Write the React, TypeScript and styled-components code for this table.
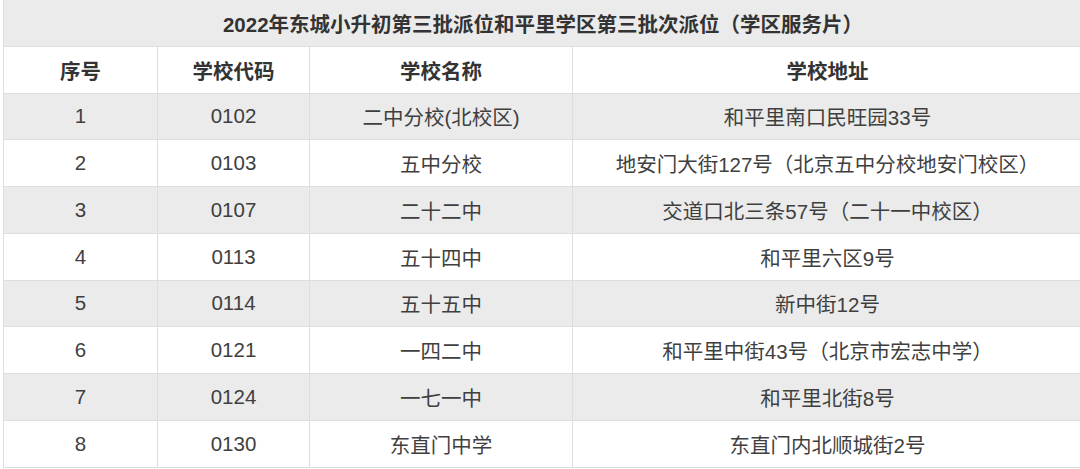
import React from "react";
import styled, { createGlobalStyle } from "styled-components";

const GlobalStyle = createGlobalStyle`
  html, body {
    margin: 0;
    padding: 0;
    background: #ffffff;
  }
  body {
    font-family: "Liberation Sans", "Noto Sans CJK SC", sans-serif;
    overflow: hidden;
  }
`;

const Page = styled.div`
  width: 1080px;
  height: 469px;
  overflow: hidden;
  padding-left: 3px;
  box-sizing: border-box;
`;

const Table = styled.table`
  width: 1080px;
  margin-top: -1px;
  border-collapse: collapse;
  table-layout: fixed;
  color: #3f3f3f;
  font-size: 20.5px;
`;

const Row = styled.tr<{ $shaded: boolean }>`
  height: 46.75px;
  background: ${(p) => (p.$shaded ? "#ebebeb" : "#ffffff")};
`;

const TitleCell = styled.th`
  border: 1.5px solid #dedede;
  font-weight: 700;
  color: #333333;
  text-align: center;
  padding: 0;
`;

const HeadCell = styled.th`
  border: 1.5px solid #dedede;
  font-weight: 700;
  color: #333333;
  text-align: center;
  padding: 0;
`;

const Cell = styled.td`
  border: 1.5px solid #dedede;
  text-align: center;
  padding: 0;
  white-space: nowrap;
`;

const rows: [string, string, string, string][] = [
  ["1", "0102", "二中分校(北校区)", "和平里南口民旺园33号"],
  ["2", "0103", "五中分校", "地安门大街127号（北京五中分校地安门校区）"],
  ["3", "0107", "二十二中", "交道口北三条57号（二十一中校区）"],
  ["4", "0113", "五十四中", "和平里六区9号"],
  ["5", "0114", "五十五中", "新中街12号"],
  ["6", "0121", "一四二中", "和平里中街43号（北京市宏志中学）"],
  ["7", "0124", "一七一中", "和平里北街8号"],
  ["8", "0130", "东直门中学", "东直门内北顺城街2号"],
];

export default function App() {
  return (
    <Page>
      <GlobalStyle />
      <Table>
        <colgroup>
          <col style={{ width: 154 }} />
          <col style={{ width: 152 }} />
          <col style={{ width: 263 }} />
          <col />
        </colgroup>
        <thead>
          <Row $shaded>
            <TitleCell colSpan={4}>
              2022年东城小升初第三批派位和平里学区第三批次派位（学区服务片）
            </TitleCell>
          </Row>
          <Row $shaded={false}>
            <HeadCell>序号</HeadCell>
            <HeadCell>学校代码</HeadCell>
            <HeadCell>学校名称</HeadCell>
            <HeadCell>学校地址</HeadCell>
          </Row>
        </thead>
        <tbody>
          {rows.map((r, i) => (
            <Row key={r[0]} $shaded={i % 2 === 0}>
              {r.map((c, j) => (
                <Cell key={j}>{c}</Cell>
              ))}
            </Row>
          ))}
        </tbody>
      </Table>
    </Page>
  );
}
